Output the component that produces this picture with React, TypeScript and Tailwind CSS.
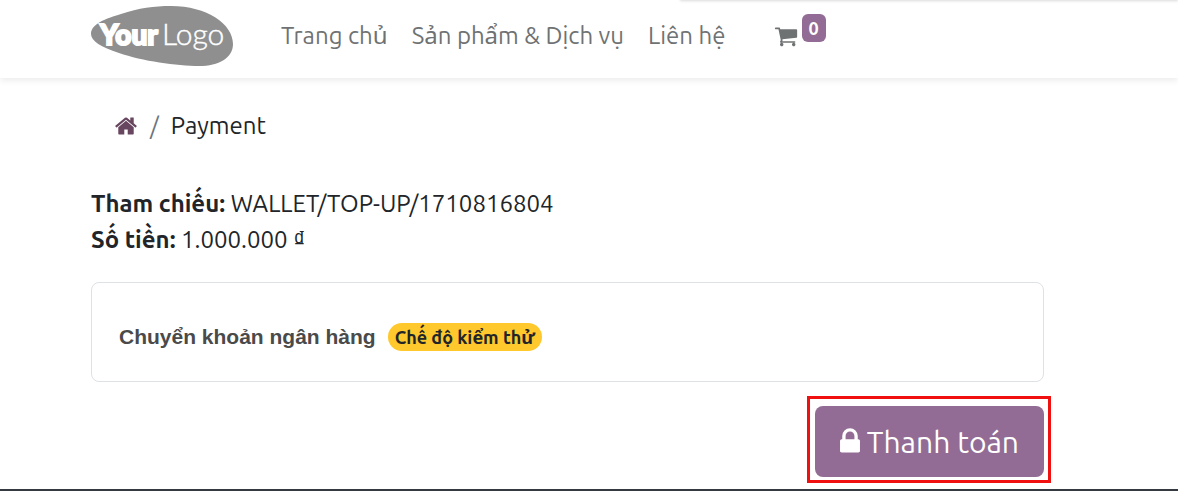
import type { ReactNode } from 'react';

const NAV_LINKS = ['Trang chủ', 'Sản phẩm & Dịch vụ', 'Liên hệ'];

const CART =
  'M704 1536q0 52-38 90t-90 38-90-38-38-90 38-90 90-38 90 38 38 90zm896 0q0 52-38 90t-90 38-90-38-38-90 38-90 90-38 90 38 38 90zm128-1088v512q0 24-16.5 42.5t-40.5 21.5l-1044 122q13 60 13 70 0 16-24 64h920q26 0 45 19t19 45-19 45-45 19h-1024q-26 0-45-19t-19-45q0-11 8-31.5t16-36 21.5-40 15.5-29.5l-177-823h-204q-26 0-45-19t-19-45 19-45 45-19h256q16 0 28.5 6.5t19.5 15.5 13 24.5 8 26 5.5 29.5 4.5 26h1201q26 0 45 19t19 45z';
const HOME =
  'M1472 992v480q0 26-19 45t-45 19h-384v-384h-256v384h-384q-26 0-45-19t-19-45v-480q0-1 .5-3t.5-3l575-474 575 474q1 2 1 6zm223-69l-62 74q-8 9-21 11h-3q-13 0-21-7l-692-577-692 577q-12 8-24 7-13-2-21-11l-62-74q-8-10-7-23.5t11-21.5l719-599q32-26 76-26t76 26l244 204v-195q0-14 9-23t23-9h192q14 0 23 9t9 23v408l219 182q10 8 11 21.5t-7 23.5z';
const LOCK =
  'M640 768h512v-192q0-106-75-181t-181-75-181 75-75 181v192zm832 96v576q0 40-28 68t-68 28h-960q-40 0-68-28t-28-68v-576q0-40 28-68t68-28h32v-192q0-184 132-316t316-132 316 132 132 316v192h32q40 0 68 28t28 68z';

function Icon({ d, viewBox = '0 0 1792 1792', className }: { d: string; viewBox?: string; className: string }) {
  return (
    <svg viewBox={viewBox} fill="currentColor" aria-hidden="true" className={className}>
      <path d={d} />
    </svg>
  );
}

function Logo() {
  return (
    <svg viewBox="0 0 142 62" role="img" aria-label="YourLogo" className="h-[62px] w-[142px]">
      <path
        d="M0 29C0 21 9 15 30 9C48 3 63 1 80 1C116 1 142 19 142 39C142 53 128 61 108 61C86 61 51 56 28 48C10 42 0 36 0 29Z"
        fill="#8f8f8f"
      />
      <text x="9" y="40" fill="#fff" stroke="#fff" strokeWidth="2" fontFamily="Lato, sans-serif" fontSize="28" fontWeight="900">
        Your
      </text>
      <text x="71" y="40" fill="#fff" stroke="#fff" strokeWidth="0.4" fontFamily="Lato, sans-serif" fontSize="30" fontWeight="300">
        Logo
      </text>
    </svg>
  );
}

function Detail({ label, children }: { label: string; children: ReactNode }) {
  return (
    <div>
      <dt className="inline font-bold">{label}</dt> <dd className="inline">{children}</dd>
    </div>
  );
}

export default function App() {
  return (
    <div className="relative overflow-hidden bg-white font-['Ubuntu','Noto_Sans',sans-serif] text-[24px] leading-9 text-[#212529]">
      {/* lower edge of the panel that hangs over the header */}
      <div className="absolute -top-2 right-0 left-[680px] h-2 shadow-[0_1px_3px_rgba(0,0,0,0.15)]" />

      <header className="flex h-[78px] items-center pb-1.5 pl-[91px] text-[#6f7273] shadow-[0_3px_6px_rgba(0,0,0,0.07)]">
        <a href="#home">
          <Logo />
        </a>
        <nav className="ml-12 flex items-center gap-6">
          {NAV_LINKS.map((label) => (
            <a key={label} href="#nav">
              {label}
            </a>
          ))}
        </nav>
        <a href="#cart" aria-label="Giỏ hàng" className="ml-12 flex items-center gap-1">
          <Icon d={CART} className="size-6" />
          <span className="mb-4 rounded-md bg-[#926c94] px-[7px] text-[18px] leading-7 font-bold text-white">0</span>
        </a>
      </header>

      <main className="pt-[30px] pr-[134px] pb-3 pl-[91px]">
        <nav aria-label="breadcrumb" className="flex items-center gap-3 pl-[23px]">
          <a href="#home" aria-label="Trang chủ" className="text-[#68465f]">
            <Icon d={HOME} className="size-6" />
          </a>
          <span className="text-[#6c757d]">/</span>
          <span>Payment</span>
        </nav>

        <dl className="mt-[42px]">
          <Detail label="Tham chiếu:">WALLET/TOP-UP/1710816804</Detail>
          <Detail label="Số tiền:">
            1.000.000 <span className="font-['Liberation_Sans',sans-serif] leading-6">₫</span>
          </Detail>
        </dl>

        <section className="mt-6 flex h-[100px] items-center gap-3 rounded-lg border border-[#dee2e6] px-[27px] pt-2.5">
          <h2 className="font-['Liberation_Sans',sans-serif] text-[21px] font-bold text-[#4a4a4a]">
            Chuyển khoản ngân hàng
          </h2>
          <span className="rounded-full bg-[#ffc82c] px-[7px] text-[18px] leading-7 font-bold">Chế độ kiểm thử</span>
        </section>

        <div className="mt-6 flex justify-end">
          <div className="relative">
            <button
              type="button"
              className="flex h-[71px] items-center gap-[7px] rounded-lg bg-[#926c94] px-[25px] text-[30px] text-white"
            >
              <Icon d={LOCK} viewBox="320 0 1152 1792" className="h-[31px] w-5" />
              Thanh toán
            </button>
            <div className="pointer-events-none absolute -top-[10px] -right-[7px] -bottom-[6px] -left-2 border-3 border-[#f01010]" />
          </div>
        </div>
      </main>

      <footer className="h-0.5 bg-[#343a40]" />
    </div>
  );
}
